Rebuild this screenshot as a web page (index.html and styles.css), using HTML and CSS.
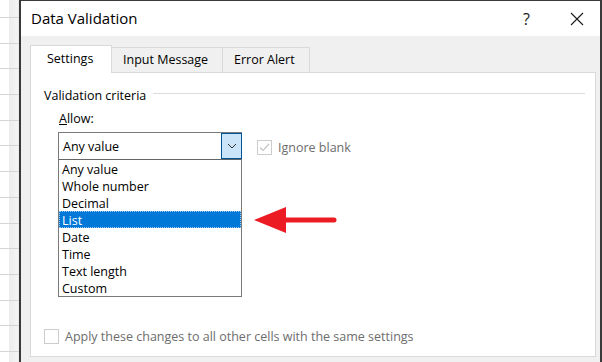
FILE: index.html
```html
<!DOCTYPE html>
<html lang="en">
<head>
  <meta charset="UTF-8">
  <title>Data Validation</title>
  <link rel="stylesheet" href="styles.css">
</head>
<body>
  <div class="sheet"></div>
  <div class="dialog">
    <div class="titlebar">
      <span class="title">Data Validation</span>
      <span class="help">?</span>
      <svg class="close" width="14" height="14" viewBox="0 0 14 14">
        <path d="M1 1 L13 13 M13 1 L1 13" stroke="#1a1a1a" stroke-width="1.1" fill="none"/>
      </svg>
    </div>

    <div class="content">
      <div class="tabs">
        <div class="tab active">Settings</div>
        <div class="tab">Input Message</div>
        <div class="tab">Error Alert</div>
      </div>

      <div class="panel">
        <div class="group-title">
          <span>Validation criteria</span>
          <div class="rule"></div>
        </div>

        <div class="allow">
          <label class="label"><u>A</u>llow:</label>
          <div class="allow-row">
            <div class="combo-wrap">
              <div class="combo">
                <span class="combo-value">Any value</span>
                <div class="combo-btn">
                  <svg width="10" height="6" viewBox="0 0 10 6">
                    <path d="M1 1 L5 5 L9 1" stroke="#333" stroke-width="1" fill="none"/>
                  </svg>
                </div>
              </div>
              <ul class="options">
                <li>Any value</li>
                <li>Whole number</li>
                <li>Decimal</li>
                <li class="selected">List</li>
                <li>Date</li>
                <li>Time</li>
                <li>Text length</li>
                <li>Custom</li>
              </ul>
            </div>
            <div class="check disabled">
              <span class="box">
                <svg width="13" height="13" viewBox="0 0 13 13">
                  <path d="M2 6.5 L5 9.5 L11 3" stroke="#c4c4c4" stroke-width="1.2" fill="none"/>
                </svg>
              </span>
              <span>Ignore blank</span>
            </div>
          </div>
        </div>

        <div class="check disabled apply">
          <span class="box"></span>
          <span>Apply these changes to all other cells with the same settings</span>
        </div>
      </div>
    </div>

    <!-- flecha roja de anotación -->
    <svg class="arrow" width="84" height="28" viewBox="0 0 84 28">
      <path d="M0 14 L32 1 L32 27 Z" fill="#ec1c24"/>
      <line x1="30" y1="14" x2="80" y2="14" stroke="#ec1c24" stroke-width="5" stroke-linecap="round"/>
    </svg>
  </div>
</body>
</html>
```

FILE: styles.css
```css
* {
  box-sizing: border-box;
}

body {
  margin: 0;
  width: 602px;
  height: 362px;
  overflow: hidden;
  display: flex;
  font-family: 'Open Sans', 'Noto Sans', sans-serif;
  font-size: 12.5px;
  color: #000;
  background-color: #fff;
}

.sheet {
  width: 19px;
  flex-shrink: 0;
  background:
    repeating-linear-gradient(to bottom, transparent 0, transparent 17px, #d4d4d4 17px, #d4d4d4 18px, transparent 18px, transparent 25.7px),
    linear-gradient(to right, #fff 0, #fff 9px, #ececec 9px, #f4f4f4 18px, #e0e0e0 19px);
}

.dialog {
  flex: 1;
  position: relative;
  display: flex;
  flex-direction: column;
  background-color: #f0f0f0;
  border-left: 2px solid #3a3a3a;
  border-top: 1px solid #3a3a3a;
  border-right: 2px solid #3a3a3a;
}

.titlebar {
  height: 35px;
  flex-shrink: 0;
  background-color: #fff;
  display: flex;
  align-items: center;
  padding-left: 10px;
}

.title {
  font-size: 15px;
  flex: 1;
  margin-top: -1px;
}

.help {
  font-size: 16px;
  margin-right: 40px;
  color: #1a1a1a;
}

.close {
  margin-right: 16px;
}

.content {
  flex: 1;
  display: flex;
  flex-direction: column;
  padding: 9px 4px 5px 9px;
}

.tabs {
  display: flex;
  align-items: flex-end;
  height: 27px;
  flex-shrink: 0;
}

.tab {
  height: 25px;
  padding: 0 11px;
  border: 1px solid #d9d9d9;
  border-left: none;
  border-bottom: none;
  line-height: 23px;
  background-color: #f0f0f0;
}

.tab:nth-child(2) {
  width: 111px;
}

.tab:nth-child(3) {
  width: 87px;
}

.tab.active {
  width: 82px;
  height: 28px;
  margin-bottom: -1px;
  padding: 0 16px;
  line-height: 25px;
  border-left: 1px solid #d9d9d9;
  background-color: #fff;
  position: relative;
}

.panel {
  flex: 1;
  display: flex;
  flex-direction: column;
  background-color: #fff;
  border: 1px solid #d9d9d9;
  padding: 12px 10px 11px 13px;
}

.group-title {
  display: flex;
  align-items: center;
  gap: 7px;
  height: 20px;
}

.rule {
  flex: 1;
  height: 1px;
  margin-top: -3px;
  background-color: #dcdcdc;
}

.allow {
  padding-left: 14px;
  margin-top: 6px;
}

.label {
  display: block;
  height: 16px;
  line-height: 16px;
  padding-left: 1px;
}

.allow-row {
  display: flex;
  align-items: flex-start;
  gap: 15px;
  margin-top: 5px;
}

.combo-wrap {
  width: 184px;
}

.combo {
  height: 27px;
  display: flex;
  border: 1px solid #7a7a7a;
  border-bottom: none;
}

.combo-value {
  flex: 1;
  padding-left: 4px;
  line-height: 27px;
}

.combo-btn {
  width: 21px;
  height: 26px;
  display: flex;
  align-items: center;
  justify-content: center;
  background-color: #cce4f7;
  border: 1px solid #005499;
  margin-right: -1px;
}

.options {
  list-style: none;
  margin: 0;
  padding: 0;
  border: 1px solid #7a7a7a;
  border-top: 1px solid #646464;
}

.options li {
  height: 17px;
  line-height: 15px;
  padding: 2px 0 0 3px;
}

.options li.selected {
  background-color: #0078d7;
  color: #fff;
  outline: 1px dotted #9cc9ef;
  outline-offset: -1px;
}

.check {
  display: flex;
  align-items: center;
  gap: 6px;
}

.check.disabled {
  color: #6d6d6d;
}

.allow-row .check {
  margin-top: 7px;
}

.box {
  width: 15px;
  height: 15px;
  border: 1px solid #cccccc;
  display: flex;
  align-items: center;
  justify-content: center;
}

.apply {
  margin-top: auto;
}

.arrow {
  position: absolute;
  left: 233px;
  top: 205px;
}
```
